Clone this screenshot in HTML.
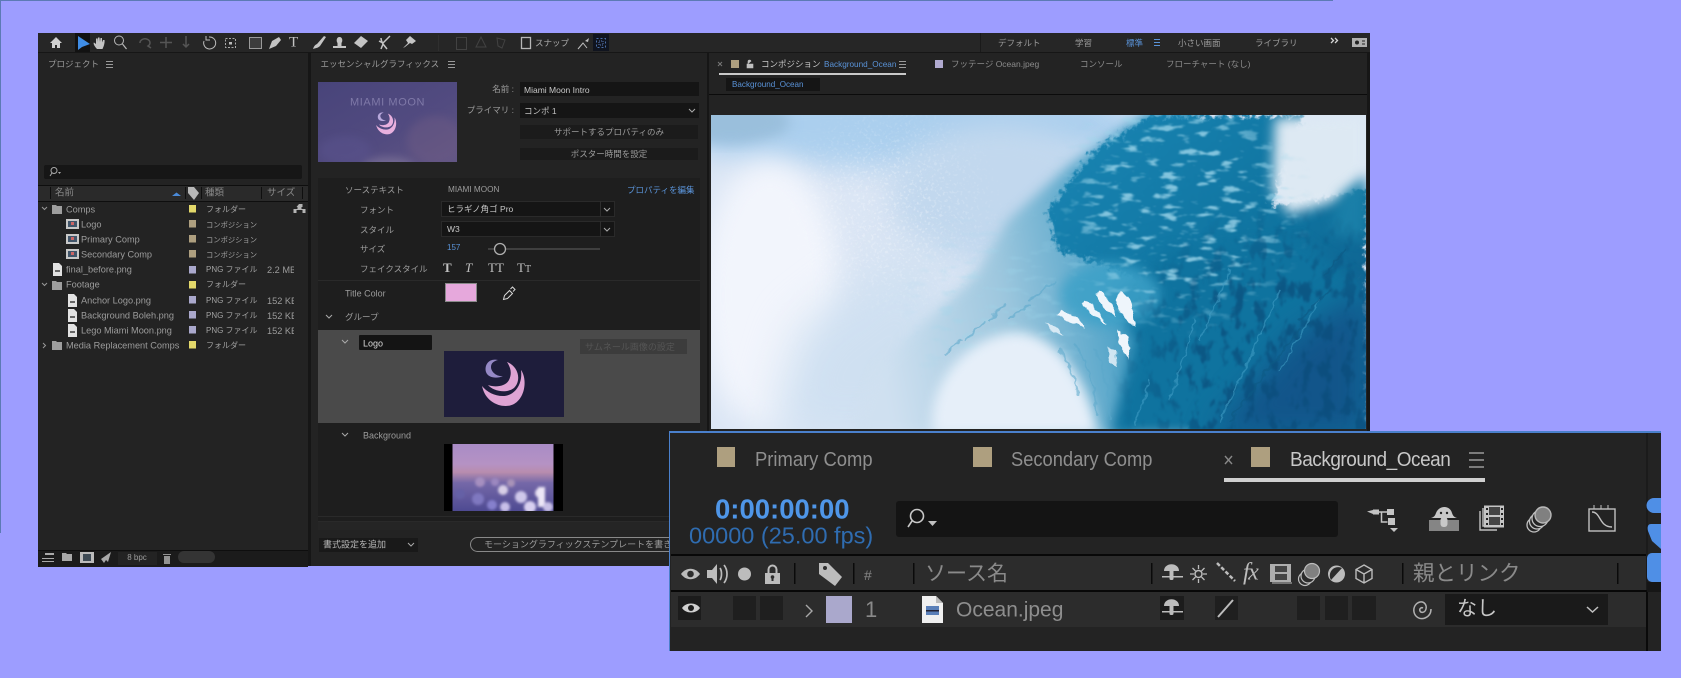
<!DOCTYPE html>
<html lang="ja"><head><meta charset="utf-8"><title>After Effects</title>
<style>
html,body{margin:0;padding:0;width:1681px;height:678px;overflow:hidden;background:#9d9dff}
body{position:relative;font-family:"Liberation Sans","Noto Sans CJK JP",sans-serif}
.b{position:absolute}
.t{position:absolute;white-space:nowrap;line-height:1;transform:translateY(-50%);font-size:8.5px;color:#9c9c9c}
.n{font-size:9.2px}.k{font-size:8px;color:#a2a2a2}.c{font-size:7.3px;color:#a2a2a2}
.r{transform:translate(-100%,-50%)}.m{transform:translate(-50%,-50%)}
.bl{color:#5a93d8}
svg{position:absolute;left:0;top:0;overflow:visible}
</style></head><body>
<div class="b" style="left:0;top:0;width:1333px;height:1px;background:#5c7ab5"></div>
<div class="b" style="left:0;top:0;width:1px;height:533px;background:#5c7ab5"></div>

<!-- main window -->
<div class="b" style="left:38px;top:33px;width:1332px;height:533px;background:#161616"></div>
<div class="b" style="left:38px;top:33px;width:1332px;height:19px;background:#262626"></div>
<div class="b" style="left:38px;top:53px;width:270px;height:513px;background:#232323"></div>
<div class="b" style="left:311px;top:53px;width:396px;height:513px;background:#232323"></div>
<div class="b" style="left:709px;top:53px;width:658px;height:513px;background:#232323"></div>
<div class="b" style="left:75px;top:33px;width:15px;height:19px;background:#121212"></div>
<div class="b" style="left:593px;top:34px;width:16px;height:17px;background:#10141f"></div>
<div class="b" style="left:980px;top:33px;width:1px;height:19px;background:#1a1a1a"></div>

<!-- project panel -->
<div class="b" style="left:44px;top:165px;width:258px;height:14px;background:#161616;border-radius:2px"></div>
<div class="b" style="left:38px;top:185px;width:270px;height:15px;background:#2a2a2a;border-top:1px solid #0e0e0e;border-bottom:1px solid #0e0e0e"></div>
<div class="b" style="left:38px;top:550px;width:270px;height:16px;background:#1b1b1b;border-top:1px solid #0e0e0e"></div>
<div class="b" style="left:118px;top:552px;width:39px;height:13px;background:#232323"></div>
<div class="b" style="left:178px;top:551px;width:37px;height:12px;background:#343434;border-radius:6px"></div>

<!-- essential graphics -->
<svg width="1681" height="678" viewBox="0 0 1681 678">
<defs>
<linearGradient id="th" x1="0" y1="0" x2="1" y2="1"><stop offset="0" stop-color="#48447a"/><stop offset=".6" stop-color="#524b80"/><stop offset="1" stop-color="#625684"/></linearGradient>
<linearGradient id="bok" x1="0" y1="0" x2="0" y2="1"><stop offset="0" stop-color="#a98cc6"/><stop offset=".3" stop-color="#b592c4"/><stop offset=".42" stop-color="#b88dae"/><stop offset=".58" stop-color="#7568a8"/><stop offset="1" stop-color="#4e4a92"/></linearGradient>
<filter id="bl2" x="-30%" y="-30%" width="160%" height="160%"><feGaussianBlur stdDeviation="4"/></filter>
<filter id="bl1" x="-30%" y="-30%" width="160%" height="160%"><feGaussianBlur stdDeviation="1.300"/></filter>
<clipPath id="thc"><rect x="318" y="82" width="139" height="80"/></clipPath>
</defs>
<rect x="318" y="82" width="139" height="80" fill="url(#th)"/>
<g clip-path="url(#thc)">
<ellipse cx="435" cy="140" rx="28" ry="24" fill="#6e5c84" opacity=".45" filter="url(#bl2)"/>
<ellipse cx="388" cy="166" rx="26" ry="9" fill="#8a80a0" opacity=".5" filter="url(#bl2)"/>
<ellipse cx="345" cy="150" rx="26" ry="14" fill="#5b5590" opacity=".45" filter="url(#bl2)"/>
</g>
<g transform="translate(386 124) scale(.47) translate(-503 -384)">
<path d="M482 386C486 405 505 409 514 404C526 397 527 378 521 370C523 385 514 396 503 396C494 396 487 392 482 386Z M507 362C518 366 522 380 514 388C506 394 493 391 488 385C496 388 506 386 509 380C512 374 511 368 507 362Z" fill="#e8b0de"/>
<path d="M498 360C489 358 484 365 486 372C488 378 497 379 503 376C497 377 491 372 491 367C491 363 494 361 498 360Z" fill="#b8a8dc"/>
</g>
</svg>
<div class="t" style="left:350px;top:103px;font-size:11px;letter-spacing:.6px;color:#7f79a8">MIAMI MOON</div>

<div class="b" style="left:520px;top:82px;width:179px;height:14px;background:#151515"></div>
<div class="b" style="left:520px;top:103px;width:179px;height:15px;background:#151515"></div>
<div class="b" style="left:520px;top:125px;width:178px;height:14px;background:#1b1b1b"></div>
<div class="b" style="left:520px;top:148px;width:178px;height:12px;background:#1b1b1b"></div>
<div class="b" style="left:318px;top:178px;width:382px;height:346px;background:#1e1e1e"></div>
<div class="b" style="left:318px;top:280px;width:382px;height:1px;background:#2a2a2a"></div>
<div class="b" style="left:441px;top:201px;width:174px;height:16px;background:#151515;border:1px solid #2a2a2a;box-sizing:border-box"></div>
<div class="b" style="left:441px;top:221px;width:174px;height:16px;background:#151515;border:1px solid #2a2a2a;box-sizing:border-box"></div>
<div class="b" style="left:600px;top:201px;width:1px;height:16px;background:#2e2e2e"></div>
<div class="b" style="left:600px;top:221px;width:1px;height:16px;background:#2e2e2e"></div>
<div class="b" style="left:445px;top:283px;width:32px;height:19px;background:#e6a8dc;border:1px solid #8a8a8a;box-sizing:border-box"></div>
<div class="b" style="left:318px;top:330px;width:382px;height:93px;background:#4a4a4a"></div>
<div class="b" style="left:359px;top:335px;width:73px;height:15px;background:#141414;border-radius:1px"></div>
<div class="b" style="left:444px;top:351px;width:120px;height:66px;background:#1e1d3b"></div>
<div class="b" style="left:580px;top:339px;width:107px;height:15px;background:#3c3c3c"></div>
<div class="b" style="left:444px;top:444px;width:119px;height:67px;background:#000"></div>
<svg width="1681" height="678" viewBox="0 0 1681 678">
<path d="M482 386C486 405 505 409 514 404C526 397 527 378 521 370C523 385 514 396 503 396C494 396 487 392 482 386Z M507 362C518 366 522 380 514 388C506 394 493 391 488 385C496 388 506 386 509 380C512 374 511 368 507 362Z" fill="#dfa4d4"/>
<path d="M498 360C489 358 484 365 486 372C488 378 497 379 503 376C497 377 491 372 491 367C491 363 494 361 498 360Z" fill="#9589c6"/>
<clipPath id="bkc"><rect x="452.500" y="444" width="101" height="67"/></clipPath>
<rect x="452.500" y="444" width="101" height="67" fill="url(#bok)"/>
<g filter="url(#bl1)" clip-path="url(#bkc)">
<circle cx="503" cy="490" r="5" fill="#d8cfe6"/><circle cx="521" cy="497" r="6" fill="#cfc8ea"/><circle cx="540" cy="493" r="5" fill="#e6def0"/><rect x="538" y="487" width="7" height="20" fill="#ece6f6"/>
<circle cx="480" cy="482" r="5" fill="#a68fc0"/><circle cx="495" cy="482" r="4" fill="#9c88c0"/><circle cx="511" cy="483" r="4" fill="#a893b8"/><circle cx="478" cy="499" r="6" fill="#7f78c0"/><circle cx="492" cy="505" r="5" fill="#8680cc"/><circle cx="460" cy="494" r="5" fill="#6560a6"/><circle cx="505" cy="507" r="5" fill="#c8c0e8"/><circle cx="530" cy="507" r="6" fill="#d8d0f0"/><circle cx="548" cy="507" r="5" fill="#c8c0e6"/>
</g>
</svg>
<div class="b" style="left:318px;top:516px;width:382px;height:1px;background:#2a2a2a"></div>
<div class="b" style="left:318px;top:521px;width:382px;height:1px;background:#2a2a2a"></div>
<div class="b" style="left:318px;top:522px;width:382px;height:8px;background:#252525"></div>
<div class="b" style="left:319px;top:538px;width:99px;height:14px;background:#191919"></div>
<div class="b" style="left:470px;top:537px;width:215px;height:15px;border:1px solid #888;border-radius:8px;box-sizing:border-box"></div>

<!-- composition panel -->
<div class="b" style="left:719px;top:73px;width:187px;height:1.500px;background:#c9c9c9"></div>
<div class="b" style="left:726px;top:78px;width:94px;height:13px;background:#151515"></div>
<div class="b" style="left:709px;top:94px;width:658px;height:1px;background:#0b0b0b"></div>
<div class="b" style="left:731px;top:60px;width:8px;height:8px;background:#ae9f7f"></div>
<div class="b" style="left:935px;top:60px;width:8px;height:8px;background:#b0aad0"></div>

<svg width="1681" height="678" viewBox="0 0 1681 678">
<defs>
<clipPath id="cw"><rect x="711" y="115" width="655" height="314"/></clipPath>
<filter id="wb" x="-30%" y="-30%" width="160%" height="160%" color-interpolation-filters="sRGB"><feGaussianBlur stdDeviation="14"/></filter>
<filter id="wb2" x="-20%" y="-20%" width="140%" height="140%" color-interpolation-filters="sRGB"><feGaussianBlur stdDeviation="6"/></filter>
<filter id="wb3" x="-20%" y="-20%" width="140%" height="140%" color-interpolation-filters="sRGB"><feGaussianBlur stdDeviation="22"/></filter>
<filter id="rough" x="-10%" y="-10%" width="120%" height="120%" color-interpolation-filters="sRGB"><feGaussianBlur stdDeviation="1.500" result="s"/><feTurbulence type="fractalNoise" baseFrequency=".18" numOctaves="3" seed="4"/><feDisplacementMap in="s" scale="16" xChannelSelector="R" yChannelSelector="G"/></filter>
<filter id="rough2" x="-10%" y="-10%" width="120%" height="120%" color-interpolation-filters="sRGB"><feTurbulence type="fractalNoise" baseFrequency=".12" numOctaves="2" seed="9"/><feDisplacementMap in="SourceGraphic" scale="7" xChannelSelector="R" yChannelSelector="G"/></filter>
<filter id="mot" x="0" y="0" width="100%" height="100%" color-interpolation-filters="sRGB"><feTurbulence type="fractalNoise" baseFrequency=".05 .16" numOctaves="3" seed="3"/><feColorMatrix values="0 0 0 0 .62  0 0 0 0 .84  0 0 0 0 .92  6 0 0 0 -3.400"/><feGaussianBlur stdDeviation=".7"/></filter>
<filter id="mot2" x="0" y="0" width="100%" height="100%" color-interpolation-filters="sRGB"><feTurbulence type="fractalNoise" baseFrequency=".09 .05" numOctaves="3" seed="11"/><feColorMatrix values="0 0 0 0 .04  0 0 0 0 .30  0 0 0 0 .48  6 0 0 0 -3.100"/><feGaussianBlur stdDeviation=".7"/></filter>
<filter id="spk" x="0" y="0" width="100%" height="100%" color-interpolation-filters="sRGB"><feTurbulence type="fractalNoise" baseFrequency=".35" numOctaves="2" seed="7"/><feColorMatrix values="0 0 0 0 1  0 0 0 0 1  0 0 0 0 1  5 0 0 0 -2.700"/></filter>
<linearGradient id="dk" x1="0" y1="0" x2="1" y2="1"><stop offset="0" stop-color="#1a86b4"/><stop offset=".55" stop-color="#0f739f"/><stop offset="1" stop-color="#115585"/></linearGradient>
<linearGradient id="md" gradientUnits="userSpaceOnUse" x1="870" y1="300" x2="1130" y2="250"><stop offset="0" stop-color="#cfe0f0"/><stop offset=".5" stop-color="#9dc7de"/><stop offset="1" stop-color="#3d9ac2"/></linearGradient>
<radialGradient id="mkA" gradientUnits="userSpaceOnUse" cx="1180" cy="205" r="135"><stop offset=".55" stop-color="#ccc"/><stop offset="1" stop-color="#000"/></radialGradient>
<mask id="mA"><rect x="711" y="115" width="655" height="314" fill="url(#mkA)"/></mask>
<radialGradient id="mkB" gradientUnits="userSpaceOnUse" cx="1000" cy="310" r="110"><stop offset=".4" stop-color="#fff"/><stop offset="1" stop-color="#000"/></radialGradient>
<mask id="mB"><rect x="711" y="115" width="655" height="314" fill="url(#mkB)"/></mask>
<radialGradient id="mkC" gradientUnits="userSpaceOnUse" cx="890" cy="210" r="120"><stop offset=".3" stop-color="#888"/><stop offset="1" stop-color="#000"/></radialGradient>
<mask id="mC"><rect x="711" y="115" width="655" height="314" fill="url(#mkC)"/></mask>
<radialGradient id="mkD" gradientUnits="userSpaceOnUse" cx="1280" cy="370" r="170"><stop offset=".5" stop-color="#fff"/><stop offset="1" stop-color="#000"/></radialGradient>
<mask id="mD"><rect x="711" y="115" width="655" height="314" fill="url(#mkD)"/></mask>
</defs>
<g clip-path="url(#cw)">
<rect x="711" y="115" width="655" height="314" fill="#dbe6f5"/>
<ellipse cx="900" cy="125" rx="240" ry="42" fill="#abcfee" filter="url(#wb)"/>
<ellipse cx="730" cy="122" rx="60" ry="22" fill="#9abfdc" filter="url(#wb2)"/>
<ellipse cx="1000" cy="195" rx="110" ry="70" fill="#c2d8ee" filter="url(#wb)"/>
<ellipse cx="770" cy="295" rx="70" ry="135" fill="#f2f5fc" filter="url(#wb)"/>
<path d="M920 240L800 330 770 435 900 435 960 340Z" fill="#cfe0f1" filter="url(#wb3)"/>
<path d="M1150 110L1070 165 1008 220 975 275 922 325 878 367 850 435 1130 435 1200 110Z" fill="url(#md)" filter="url(#wb2)"/>
<rect x="711" y="115" width="655" height="314" filter="url(#spk)" mask="url(#mC)" opacity=".5"/>
<rect x="711" y="115" width="655" height="314" filter="url(#mot)" mask="url(#mB)" opacity=".3"/>
<path d="M1150 116L1095 150 1048 210 1058 250 1115 270 1165 290 1190 435 1366 435 1366 190 1310 200 1272 205 1303 115Z" fill="url(#dk)" filter="url(#rough)"/>
<path d="M1170 250L1110 300 1135 340 1110 435 1366 435 1366 290 1300 240Z" fill="#0f739f" filter="url(#wb2)"/>
<path d="M1210 435L1290 340 1366 290 1366 435Z" fill="#12558a" filter="url(#wb)"/>
<ellipse cx="1110" cy="295" rx="50" ry="32" fill="#3da1c8" filter="url(#wb2)" opacity=".85"/>
<path d="M1275 118L1366 115 1366 165 1345 198 1290 215 1272 190Z" fill="#dde9f3" filter="url(#wb2)"/>
<path d="M1340 195L1366 175 1366 240 1330 232Z" fill="#1a7fa8" filter="url(#wb2)"/>
<rect x="711" y="115" width="655" height="314" filter="url(#mot)" mask="url(#mA)"/>
<rect x="711" y="115" width="655" height="314" filter="url(#mot2)" mask="url(#mD)" opacity=".7"/>
<path d="M933 435C925 380 970 335 1015 332C1060 332 1092 390 1098 435Z" fill="#e6eff9" filter="url(#wb2)"/>
<g fill="#eef5fb" filter="url(#rough2)">
<path d="M1120 290l10 10 5 26-9-5-11-20z"/><path d="M1100 290l12 16 3 12-13-12-8-12z"/><path d="M1085 300l14 10 7 14-15-10-10-10z"/><path d="M1060 310l18 8 8 10-17-6-13-8z"/><path d="M1118 330l10 6 2 24-9-10z"/><path d="M1045 322l14 6 6 8-13-5z" opacity=".8"/><path d="M1108 345l8 5 1 18-8-10z" opacity=".8"/>
</g>
<g fill="none" stroke="#5ba8cb" stroke-width="2" stroke-linecap="round" filter="url(#rough2)" opacity=".55">
<path d="M990 320l14-16M965 340l20-18M945 355l16-16M1030 300l25-18M1010 318l18-12M1075 345q20 30 22 70M1095 350q15 30 15 70M1060 350q15 25 18 45"/>
</g>
<g fill="none" stroke="#3f9cc4" stroke-width="1.500" stroke-linecap="round" filter="url(#rough2)" opacity=".6">
<path d="M1230 270l-30 70M1195 320l-25 80M1280 290l-40 90M1150 380l-15 45M1255 350l-35 70M1320 300l-40 70"/>
</g>
<g fill="none" stroke="#0d5a85" stroke-width="2" stroke-linecap="round" filter="url(#rough2)" opacity=".6">
<path d="M1300 330l-40 50M1330 290l-30 30M1260 380l-30 40M1345 250l-20 25"/>
</g>
</g>

<!-- toolbar icons -->
<path d="M50 43L56 37 62 43H60V48H57V45H55V48H52V43Z" fill="#cfcfcf"/>
<path d="M78 36V50L82 47 90 44Z" fill="#3f8de6"/>
<path d="M97 49C94 46 93 43 94 42.500L96 44V38.500H97.500V42L98 37.500H99.500L100 42 100.500 38H102V42.500L103 40H104.500C105 43 103.500 47 102.500 49Z" fill="#c4c4c4"/>
<circle cx="119" cy="40.500" r="4.500" fill="none" stroke="#b8b8b8"/><path d="M122.500 44L126.500 49" stroke="#b8b8b8" stroke-width="1.200"/>
<g stroke="#555" fill="none" stroke-width="1.500"><path d="M140 43a5 4 0 1 1 8 3l3 2"/><path d="M166 37v11M160 42.500h12"/><path d="M186 36v11M183 44l3 3 3-3"/></g>
<path d="M209 37a6 6 0 1 1-5 4M206 36v4h4" fill="none" stroke="#bcbcbc"/>
<rect x="225.500" y="38.500" width="10" height="9" fill="none" stroke="#aaa" stroke-dasharray="2 1.500"/><rect x="229" y="42" width="3" height="2.500" fill="#bbb"/>
<rect x="249.500" y="37.500" width="12" height="11" fill="#3d3d3d" stroke="#9a9a9a"/>
<path d="M269 49L272 41 279 37 281 40 276 46Z" fill="#c4c4c4"/>
<path d="M313 49C314 46 315 45 317 44L324 36 326 37 320 46C318 48 316 48 313 49Z" fill="#c4c4c4"/>
<path d="M333 48h13v-2h-4.500v-3c1.500-2 1-6-2-6s-3.500 4-2 6v3H333Z" fill="#c4c4c4"/>
<path d="M354 43L361 36 368 41 361 48Z" fill="#c4c4c4"/><path d="M381 38c0 3 1 4 2 6l-2 5M383 44l4 5M379 41l4 2 3-3 4-4" stroke="#c4c4c4" stroke-width="1.500" fill="none"/>
<path d="M403 48l5-5-2-3 4-4 6 5-4 3-2-1-5 4z" fill="#c4c4c4"/>
<rect x="438" y="35" width="1" height="16" fill="#2f2f2f"/>
<g fill="none" stroke="#424242"><rect x="456.500" y="37.500" width="10" height="12"/><path d="M481 37l5 10h-10zM497 38l8 2-3 8-4-2z"/></g>
<rect x="521.500" y="37.500" width="9" height="11" fill="none" stroke="#b6b6b6" stroke-width="1.300"/>
<path d="M578 49l5-6 4 5" stroke="#c0c0c0" fill="none" stroke-width="1"/><path d="M585 41l4-3-1 4z" fill="#c0c0c0"/>
<rect x="596.500" y="38.500" width="9" height="9" fill="none" stroke="#4a6ea8" stroke-dasharray="2 2"/><rect x="599" y="41" width="4" height="4" fill="none" stroke="#5a7ab8" stroke-dasharray="1 1"/>
<path d="M1331 38l2.500 2.500-2.500 2.500M1335 38l2.500 2.500-2.500 2.500" fill="none" stroke="#d4d4d4" stroke-width="1.300"/>
<rect x="1352" y="38" width="15" height="9" fill="#b0b0b0"/><circle cx="1357" cy="42.500" r="2" fill="#222"/><path d="M1362 41h3M1362 44h3" stroke="#222"/>

<!-- panel menus -->
<g stroke="#9a9a9a" fill="none">
<path d="M106 61.500h7M106 64.500h7M106 67.500h7M448 61.500h7M448 64.500h7M448 67.500h7"/>
<path d="M899 61.500h7M899 64.500h7M899 67.500h7"/>
<path d="M1154 39.500h6M1154 42.500h6M1154 45.500h6" stroke="#5a93d8"/>
<path d="M718 62l4 4m0-4l-4 4" stroke="#777"/>
</g>
<path d="M747 64h6v4h-6zM748 64v-2.500a1.500 1.500 0 0 1 3 0" fill="#c0c0c0" stroke="#c0c0c0" stroke-width=".6"/>

<!-- project icons -->
<circle cx="54" cy="170.500" r="3" fill="none" stroke="#aaa"/><path d="M52 173l-2 3" stroke="#aaa"/><path d="M58 172h3l-1.500 2z" fill="#aaa"/>
<path d="M172 196l4.500-3.500 4.500 3.500z" fill="#4a8ad8"/>
<path d="M188 187h6l5 6-5 7-6-7z" fill="#b8b8b8"/>
<g fill="#0f0f0f"><rect x="50" y="187" width="1" height="12"/><rect x="185" y="187" width="1" height="12"/><rect x="201" y="187" width="1" height="12"/><rect x="261" y="187" width="1" height="12"/><rect x="302" y="187" width="1" height="12"/></g>
<g fill="none" stroke="#999"><path d="M42 207l2.500 2.500 2.500-2.500M42 283l2.500 2.500 2.500-2.500M43 343l2.500 2.500-2.500 2.500"/></g>
<g fill="#9e9e9e"><path d="M52 205h4l1 1h5v8H52z"/><path d="M52 281h4l1 1h5v8H52z"/><path d="M52 341h4l1 1h5v8H52z"/></g>
<g>
<rect x="66" y="219" width="13" height="10" fill="#c8c8c8"/><rect x="68" y="221" width="9" height="6" fill="#41556a"/><rect x="71" y="222" width="3" height="3" fill="#c66"/>
<rect x="66" y="234" width="13" height="10" fill="#c8c8c8"/><rect x="68" y="236" width="9" height="6" fill="#41556a"/><rect x="71" y="237" width="3" height="3" fill="#c66"/>
<rect x="66" y="249" width="13" height="10" fill="#c8c8c8"/><rect x="68" y="251" width="9" height="6" fill="#41556a"/><rect x="71" y="252" width="3" height="3" fill="#c66"/>
</g>
<g fill="#e2e2e2"><path d="M53 263h6l3 3v10h-9z"/><path d="M68 294h6l3 3v10h-9z"/><path d="M68 309h6l3 3v10h-9z"/><path d="M68 324h6l3 3v10h-9z"/></g>
<g fill="#666"><rect x="55" y="270" width="5" height="2"/><rect x="70" y="301" width="5" height="2"/><rect x="70" y="316" width="5" height="2"/><rect x="70" y="331" width="5" height="2"/></g>
<g>
<rect x="189" y="205" width="7" height="7.500" fill="#e3d86a"/><rect x="189" y="220" width="7" height="7.500" fill="#ae9f7f"/><rect x="189" y="235" width="7" height="7.500" fill="#ae9f7f"/><rect x="189" y="250" width="7" height="7.500" fill="#ae9f7f"/><rect x="189" y="266" width="7" height="7.500" fill="#aaa8cc"/><rect x="189" y="281" width="7" height="7.500" fill="#e3d86a"/><rect x="189" y="296" width="7" height="7.500" fill="#aaa8cc"/><rect x="189" y="311" width="7" height="7.500" fill="#aaa8cc"/><rect x="189" y="326" width="7" height="7.500" fill="#aaa8cc"/><rect x="189" y="341" width="7" height="7.500" fill="#e3d86a"/>
</g>
<path d="M299 204h3.500v3h-1v2h4v4h-3v-3h-6v3h-3v-4h4v-2h-1z" fill="#b4b4b4"/>
<g fill="#a8a8a8"><path d="M45 553h9v2h-9zM42 558h12v1H42zM42 561h12v1H42z"/><path d="M62 553h4l1 1h5v7H62z"/><rect x="80" y="552" width="14" height="11" fill="#bbb"/><rect x="83" y="554" width="8" height="7" fill="#3f4b55"/><path d="M101 559l10-7-3 10-2-2-2 3z"/><path d="M163 554h8v1h-8zM164 556h6v8h-6z" fill-opacity=".85"/></g>

<!-- essential chevrons -->
<g fill="none" stroke="#aaa"><path d="M689 109l3 3 3-3M604 208l3 3 3-3M604 228l3 3 3-3M326 315l3 3 3-3M342 340l3 3 3-3M342 433l3 3 3-3M408 543l3 3 3-3"/></g>
<path d="M488 249h112" stroke="#4a4a4a" stroke-width="1.500"/>
<circle cx="500" cy="249" r="5.500" fill="#1e1e1e" stroke="#b0b0b0" stroke-width="1.300"/>
<path d="M503.500 299.500l1-4 5-5 3 3-5 5zM510.500 289l2-2 2.500 2.500-2 2" fill="#1e1e1e" stroke="#d8d8d8" stroke-width="1"/>
</svg>

<div class="t" style="left:289px;top:42.500px;font:15px 'Liberation Serif',serif;color:#c4c4c4">T</div>
<div class="t" style="left:48px;top:64px">プロジェクト</div>
<div class="t k" style="left:55px;top:193px;color:#888;font-size:9.5px">名前</div>
<div class="t k" style="left:205px;top:193px;color:#888;font-size:9.5px">種類</div>
<div class="t k" style="left:267px;top:193px;color:#888;font-size:9.5px">サイズ</div>
<div class="t n" style="left:66px;top:209.500px">Comps</div>
<div class="t n" style="left:81px;top:224.500px">Logo</div>
<div class="t n" style="left:81px;top:239.500px">Primary Comp</div>
<div class="t n" style="left:81px;top:254.500px">Secondary Comp</div>
<div class="t n" style="left:66px;top:270px">final_before.png</div>
<div class="t n" style="left:66px;top:285px">Footage</div>
<div class="t n" style="left:81px;top:300.500px">Anchor Logo.png</div>
<div class="t n" style="left:81px;top:315.500px">Background Boleh.png</div>
<div class="t n" style="left:81px;top:330.500px">Lego Miami Moon.png</div>
<div class="t n" style="left:66px;top:345.500px">Media Replacement Comps</div>
<div class="t k" style="left:206px;top:209.500px">フォルダー</div>
<div class="t c" style="left:206px;top:224.500px">コンポジション</div>
<div class="t c" style="left:206px;top:239.500px">コンポジション</div>
<div class="t c" style="left:206px;top:254.500px">コンポジション</div>
<div class="t k" style="left:206px;top:270px">PNG ファイル</div>
<div class="t k" style="left:206px;top:285px">フォルダー</div>
<div class="t k" style="left:206px;top:300.500px">PNG ファイル</div>
<div class="t k" style="left:206px;top:315.500px">PNG ファイル</div>
<div class="t k" style="left:206px;top:330.500px">PNG ファイル</div>
<div class="t k" style="left:206px;top:345.500px">フォルダー</div>
<div class="t n" style="left:267px;top:270px;width:27px;overflow:hidden;line-height:12px">2.2 MB</div>
<div class="t n" style="left:267px;top:300.500px;width:27px;overflow:hidden;line-height:12px">152 KB</div>
<div class="t n" style="left:267px;top:315.500px;width:27px;overflow:hidden;line-height:12px">152 KB</div>
<div class="t n" style="left:267px;top:330.500px;width:27px;overflow:hidden;line-height:12px">152 KB</div>
<div class="t m" style="left:137px;top:558px;font-size:8px">8 bpc</div>

<div class="t" style="left:320.500px;top:64px">エッセンシャルグラフィックス</div>
<div class="t r" style="left:514px;top:89px">名前 :</div>
<div class="t r" style="left:514px;top:110px">プライマリ :</div>
<div class="t" style="left:524px;top:90px;color:#c8c8c8;font-size:8.500px">Miami Moon Intro</div>
<div class="t" style="left:524px;top:111px;color:#c0c0c0;font-size:8.500px">コンポ 1</div>
<div class="t m" style="left:609px;top:132px">サポートするプロパティのみ</div>
<div class="t m" style="left:609px;top:154px">ポスター時間を設定</div>
<div class="t" style="left:345px;top:190px">ソーステキスト</div>
<div class="t" style="left:448px;top:190px;font-size:8.200px">MIAMI MOON</div>
<div class="t bl" style="left:627px;top:190px">プロパティを編集</div>
<div class="t" style="left:360px;top:210px">フォント</div>
<div class="t" style="left:447px;top:209px;color:#c8c8c8">ヒラギノ角ゴ Pro</div>
<div class="t" style="left:360px;top:230px">スタイル</div>
<div class="t" style="left:447px;top:229px;color:#c8c8c8">W3</div>
<div class="t" style="left:360px;top:249px">サイズ</div>
<div class="t bl" style="left:447px;top:248px;font-size:8px">157</div>
<div class="t" style="left:360px;top:269px">フェイクスタイル</div>
<div class="t" style="left:443px;top:268px;font:bold 13px 'Liberation Serif',serif;color:#c0c0c0">T</div>
<div class="t" style="left:465px;top:268px;font:italic 13px 'Liberation Serif',serif;color:#c0c0c0">T</div>
<div class="t" style="left:488px;top:268px;font:13px 'Liberation Serif',serif;color:#c0c0c0">TT</div>
<div class="t" style="left:517px;top:268px;font:13px 'Liberation Serif',serif;color:#c0c0c0">T<span style="font-size:10px">T</span></div>
<div class="t" style="left:345px;top:293.500px;font-size:9px">Title Color</div>
<div class="t" style="left:345px;top:317px">グループ</div>
<div class="t" style="left:363px;top:343.500px;color:#d8d8d8;font-size:9px">Logo</div>
<div class="t" style="left:585px;top:347px;color:#555;font-size:9px;width:100px;overflow:hidden;line-height:12px">サムネール画像の設定</div>
<div class="t" style="left:363px;top:436px;font-size:9px">Background</div>
<div class="t" style="left:323px;top:545px;color:#b8b8b8;font-size:9px">書式設定を追加</div>
<div class="t" style="left:484px;top:545px;font-size:9px">モーショングラフィックステンプレートを書き出し</div>

<div class="t" style="left:998px;top:43px">デフォルト</div>
<div class="t" style="left:1075px;top:43px">学習</div>
<div class="t bl" style="left:1126px;top:43px">標準</div>
<div class="t" style="left:1178px;top:43px">小さい画面</div>
<div class="t" style="left:1255px;top:43px">ライブラリ</div>
<div class="t" style="left:535px;top:43px;color:#aaa">スナップ</div>
<div class="t" style="left:761px;top:64px;color:#c8c8c8">コンポジション</div>
<div class="t bl" style="left:824px;top:64.500px;font-size:8.200px">Background_Ocean</div>
<div class="t" style="left:951px;top:64px;color:#8c8c8c">フッテージ Ocean.jpeg</div>
<div class="t" style="left:1080px;top:64px;color:#8c8c8c">コンソール</div>
<div class="t" style="left:1166px;top:64px;color:#8c8c8c">フローチャート (なし)</div>
<div class="t bl" style="left:732px;top:85px;font-size:8.100px">Background_Ocean</div>

<!-- timeline panel -->
<div class="b" style="left:669px;top:431px;width:992px;height:220px;background:#232323;border-top:2px solid #4a80cc;border-left:1.500px solid #4a80cc;box-sizing:border-box"></div>
<div class="b" style="left:1224px;top:478px;width:261px;height:4px;background:#cfcfcf"></div>
<div class="b" style="left:716.500px;top:447px;width:18.500px;height:20px;background:#ae9f7f"></div>
<div class="b" style="left:973px;top:447px;width:18.500px;height:20px;background:#ae9f7f"></div>
<div class="b" style="left:1251px;top:447px;width:19px;height:20px;background:#ae9f7f"></div>
<div class="b" style="left:896px;top:501px;width:442px;height:36px;background:#141414;border-radius:3px"></div>
<div class="b" style="left:671px;top:554px;width:975px;height:2px;background:#080808"></div>
<div class="b" style="left:671px;top:556px;width:975px;height:34px;background:#2c2c2c"></div>
<div class="b" style="left:671px;top:590px;width:975px;height:2px;background:#080808"></div>
<div class="b" style="left:671px;top:592px;width:975px;height:35px;background:#2c2c2c"></div>
<div class="b" style="left:1646px;top:433px;width:1.500px;height:157px;background:#1b1b1b"></div>
<div class="b" style="left:1646px;top:590px;width:1.500px;height:61px;background:#0a0a0a"></div>
<div class="b" style="left:1647px;top:582px;width:14px;height:10px;background:#161616"></div>
<div class="b" style="left:678px;top:596px;width:23px;height:24px;background:#1c1c1c"></div>
<div class="b" style="left:733px;top:596px;width:23px;height:24px;background:#1f1f1f"></div>
<div class="b" style="left:760px;top:596px;width:23px;height:24px;background:#1f1f1f"></div>
<div class="b" style="left:826px;top:596px;width:26px;height:27px;background:#aaa8cc"></div>
<div class="b" style="left:1160px;top:596px;width:24px;height:24px;background:#1c1c1c"></div>
<div class="b" style="left:1215px;top:596px;width:23px;height:24px;background:#1f1f1f"></div>
<div class="b" style="left:1297px;top:596px;width:23px;height:24px;background:#1f1f1f"></div>
<div class="b" style="left:1325px;top:596px;width:23px;height:24px;background:#1f1f1f"></div>
<div class="b" style="left:1352px;top:596px;width:24px;height:24px;background:#1f1f1f"></div>
<div class="b" style="left:1445px;top:594px;width:163px;height:31px;background:#1a1a1a"></div>

<svg width="1681" height="678" viewBox="0 0 1681 678">
<g fill="#4f8fe6">
<path d="M1661 498h-7a7.500 7.500 0 0 0 0 15h7z"/>
<path d="M1661 524h-10c-3 0-4 3-3 7l4 10 9 8z"/>
<path d="M1661 553h-9a5 5 0 0 0-5 5v19a5 5 0 0 0 5 5h9z"/>
</g>
<!-- search -->
<circle cx="917" cy="516" r="6.500" fill="none" stroke="#c8c8c8" stroke-width="1.600"/><path d="M912 521l-4 6" stroke="#c8c8c8" stroke-width="1.600"/><path d="M928 521h9l-4.500 5z" fill="#c0c0c0"/>
<!-- close & menu -->
<path d="M1225 456l7 8m0-8l-7 8" stroke="#888" stroke-width="1.400"/>
<path d="M1469 453h15M1469 460h15M1469 467h15" stroke="#9a9a9a" stroke-width="1.500"/>
<!-- hierarchy -->
<path d="M1367 511.500L1373 510v4z" fill="#c4c4c4"/><rect x="1373" y="509.500" width="6" height="5" fill="#c4c4c4"/><path d="M1379 512h8M1381.500 512v10h6" stroke="#c4c4c4" stroke-width="1.500" fill="none"/><rect x="1387" y="509" width="7" height="6" fill="#c4c4c4"/><rect x="1388" y="518" width="7" height="7" fill="#c4c4c4"/><path d="M1390 528h8l-4 4z" fill="#c4c4c4"/>
<!-- shy -->
<rect x="1429" y="520" width="30" height="11" fill="#858585"/><path d="M1431 518c3-1 4-2 5-5 3-8 14-8 16 0 1 3 2 4 5 5z" fill="#c8c8c8"/><rect x="1440.500" y="517" width="7" height="10" rx="3" fill="#c8c8c8"/><circle cx="1441" cy="513" r="1.200" fill="#232323"/><circle cx="1447" cy="513" r="1.200" fill="#232323"/>
<!-- film -->
<g fill="none" stroke="#c0c0c0" stroke-width="1.400"><path d="M1480 511v19h17M1483 508v18h17"/></g><rect x="1484" y="505.500" width="20" height="22" fill="#c4c4c4"/><rect x="1489" y="507" width="11" height="8" fill="#444"/><rect x="1489" y="517" width="11" height="8" fill="#444"/><g fill="#232323"><rect x="1486" y="508" width="2" height="2"/><rect x="1486" y="513" width="2" height="2"/><rect x="1486" y="518" width="2" height="2"/><rect x="1486" y="523" width="2" height="2"/><rect x="1501" y="508" width="2" height="2"/><rect x="1501" y="513" width="2" height="2"/><rect x="1501" y="518" width="2" height="2"/><rect x="1501" y="523" width="2" height="2"/></g>
<!-- motion blur -->
<g fill="#232323" stroke="#c0c0c0" stroke-width="1.300"><circle cx="1534" cy="525" r="7"/><circle cx="1537" cy="521.500" r="7.500"/><circle cx="1540" cy="518.500" r="8"/></g><circle cx="1543" cy="515" r="8" fill="#808080" stroke="#b8b8b8" stroke-width="1.400"/>
<!-- graph -->
<rect x="1589" y="509" width="26" height="22" fill="none" stroke="#c0c0c0" stroke-width="1.400"/><path d="M1592 512c9 0 7 15 20 15" fill="none" stroke="#c0c0c0" stroke-width="1.400"/><path d="M1594 505v4M1601 505v4M1608 505v4" stroke="#c0c0c0"/>
<!-- header icons -->
<path d="M681 574c5-7 14-7 19 0-5 7-14 7-19 0z" fill="#bcbcbc"/><circle cx="690.500" cy="574" r="3.300" fill="#2c2c2c"/>
<path d="M707 570h5l5-6v20l-5-6h-5z" fill="#bcbcbc"/><path d="M720 568c2 3 2 9 0 12M724 565c4 5 4 13 0 18" fill="none" stroke="#bcbcbc" stroke-width="1.700"/>
<circle cx="744.500" cy="574" r="6.500" fill="#bcbcbc"/>
<rect x="765" y="573" width="15" height="11" fill="#bcbcbc"/><path d="M768.500 573v-3.500a4 4 0 0 1 8 0v3.500" fill="none" stroke="#bcbcbc" stroke-width="2"/><circle cx="772.500" cy="577" r="1.800" fill="#2c2c2c"/><rect x="771.500" y="577" width="2" height="4" fill="#2c2c2c"/>
<path d="M819 563h9l14 14-7 9-16-12z" fill="#bcbcbc"/><circle cx="825" cy="568" r="2" fill="#2c2c2c"/>
<g fill="#0a0a0a"><rect x="794" y="563" width="1.500" height="21"/><rect x="853" y="563" width="1.500" height="21"/><rect x="913" y="563" width="1.500" height="21"/><rect x="1151" y="563" width="1.500" height="21"/><rect x="1402" y="563" width="1.500" height="21"/><rect x="1617" y="563" width="1.500" height="21"/></g>
<g fill="#bcbcbc"><path d="M1164 571c0-9 15-9 15 0z"/><rect x="1169.500" y="568" width="4" height="12" rx="1.500"/><rect x="1162" y="576" width="21" height="1.500"/></g>
<g fill="#bcbcbc"><path d="M1164 606c0-9 15-9 15 0z"/><rect x="1169.500" y="603" width="4" height="12" rx="1.500"/><rect x="1162" y="611" width="21" height="1.500"/></g>
<circle cx="1198.500" cy="574" r="3.500" fill="none" stroke="#bcbcbc" stroke-width="1.500"/><path d="M1198.500 565v4M1198.500 579v4M1190 574h4M1203 574h4M1192.500 568l3 3M1201.500 577l3 3M1204.500 568l-3 3M1195.500 577l-3 3" stroke="#bcbcbc" stroke-width="1.300"/>
<path d="M1217 563l18 18" stroke="#bcbcbc" stroke-width="2.500" stroke-dasharray="4 2"/>
<path d="M1270 564h21v18h-21z" fill="#bcbcbc" opacity=".9"/><rect x="1275" y="566" width="12" height="6" fill="#444"/><rect x="1275" y="574" width="12" height="6" fill="#444"/><path d="M1272 583h20" stroke="#bcbcbc"/>
<g fill="#2c2c2c" stroke="#bcbcbc" stroke-width="1.200"><circle cx="1305" cy="579" r="6.500"/><circle cx="1308" cy="576" r="7"/></g><circle cx="1312" cy="571" r="7.500" fill="#808080" stroke="#bcbcbc" stroke-width="1.200"/>
<circle cx="1336.500" cy="574" r="8.500" fill="#bcbcbc"/><path d="M1342 568a8.500 8.500 0 0 1-11 12z" fill="#2c2c2c" transform="rotate(180 1336.500 574)"/>
<path d="M1364 565l8 4.500v9l-8 4.500-8-4.500v-9zM1364 574v9M1356 569.500l8 4.500 8-4.500" fill="none" stroke="#bcbcbc" stroke-width="1.400"/>
<!-- row icons -->
<path d="M682 608c4-6 14-6 18 0-4 6-14 6-18 0z" fill="#d0d0d0"/><circle cx="691" cy="608" r="3" fill="#1c1c1c"/>
<path d="M806 605l6 6-6 6" fill="none" stroke="#a8a8a8" stroke-width="1.400"/>
<path d="M922 596h14l7 7v20h-21z" fill="#f0f0f0"/><path d="M936 596v7h7" fill="#bbb"/><rect x="926" y="606" width="13" height="9" fill="#5a7fb8"/><rect x="926" y="610" width="13" height="1.500" fill="#223"/>
<path d="M1218 617l15-17" stroke="#bcbcbc" stroke-width="2"/>
<path d="M1423 608c-2-1-4 1-3 3s5 2 6-2-2-8-6-7-7 5-6 10 6 8 11 6 6-6 6-9" fill="none" stroke="#b0b0b0" stroke-width="1.500"/>
<path d="M1587 607l5.500 5 5.500-5" fill="none" stroke="#c0c0c0" stroke-width="1.500"/>
</svg>

<div class="t" style="left:755px;top:460px;font-size:20px;color:#8f8f8f;transform:translateY(-50%) scaleX(.92);transform-origin:left">Primary Comp</div>
<div class="t" style="left:1011px;top:460px;font-size:20px;color:#8f8f8f;transform:translateY(-50%) scaleX(.915);transform-origin:left">Secondary Comp</div>
<div class="t" style="left:1290px;top:460px;font-size:20px;color:#c8c8c8;letter-spacing:-.5px;transform:translateY(-50%) scaleX(.95);transform-origin:left">Background_Ocean</div>
<div class="t" style="left:715px;top:509px;font-size:27.500px;font-weight:bold;color:#4f96e8">0:00:00:00</div>
<div class="t" style="left:689px;top:536px;font-size:23.500px;color:#2f6cb0">00000 (25.00 fps)</div>
<div class="t" style="left:864px;top:575px;font-size:14px;color:#888">#</div>
<div class="t" style="left:925px;top:574px;font-size:21px;color:#8a8a8a">ソース名</div>
<div class="t" style="left:1243px;top:573px;font:italic 24px 'Liberation Serif',serif;color:#bcbcbc;letter-spacing:-1.500px">fx</div>
<div class="t" style="left:1413px;top:574px;font-size:21.500px;color:#8a8a8a">親とリンク</div>
<div class="t" style="left:865px;top:610px;font-size:22px;color:#8a8a8a">1</div>
<div class="t" style="left:956px;top:610px;font-size:21px;color:#8e8e8e">Ocean.jpeg</div>
<div class="t" style="left:1457px;top:609px;font-size:20px;color:#c8c8c8">なし</div>
</body></html>
